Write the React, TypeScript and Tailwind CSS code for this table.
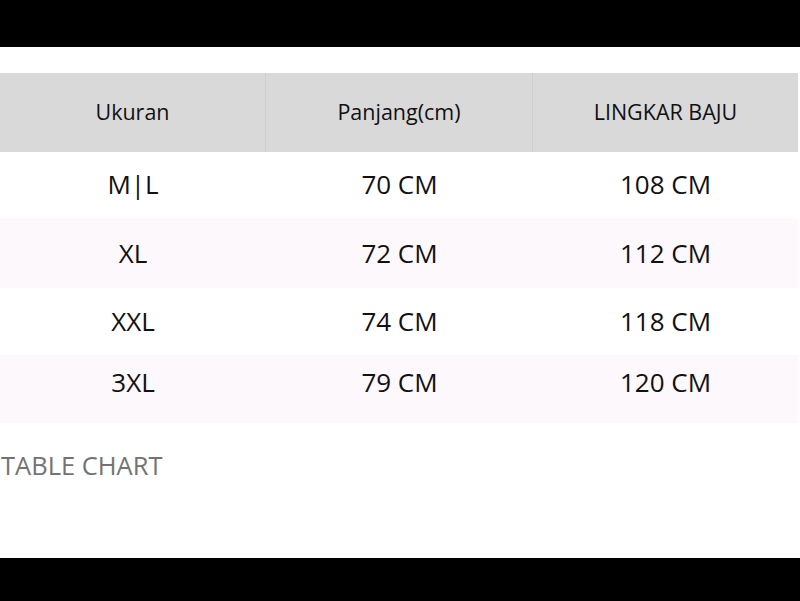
const rows = [
  { size: "M|L", len: "70 CM", chest: "108 CM", bg: "bg-white", h: "h-[66px] pb-[1px]" },
  { size: "XL", len: "72 CM", chest: "112 CM", bg: "bg-[#fdf8fc]", h: "h-[70px]" },
  { size: "XXL", len: "74 CM", chest: "118 CM", bg: "bg-white", h: "h-[67px]" },
  { size: "3XL", len: "79 CM", chest: "120 CM", bg: "bg-[#fdf8fc]", h: "h-[68px] pb-[14px]" },
];

export default function App() {
  return (
    <div className="w-[800px] h-[601px] bg-white flex flex-col overflow-hidden font-['Open_Sans',sans-serif] text-[#111]">
      <div className="h-[47px] bg-black shrink-0" />
      <div className="h-[26px] shrink-0" />

      {/* header */}
      <div className="w-[798px] h-[79px] grid grid-cols-[266px_267px_265px] bg-[#d9d9d9] text-[21.5px]">
        <div className="flex items-center justify-center border-r border-[#cfcfcf]">Ukuran</div>
        <div className="flex items-center justify-center border-r border-[#cfcfcf]">Panjang(cm)</div>
        <div className="flex items-center justify-center">LINGKAR BAJU</div>
      </div>

      {/* body */}
      {rows.map((r) => (
        <div
          key={r.size}
          className={`w-[798px] grid grid-cols-[266px_267px_265px] text-[26px] ${r.bg} ${r.h}`}
        >
          <div className="flex items-center justify-center">{r.size}</div>
          <div className="flex items-center justify-center">{r.len}</div>
          <div className="flex items-center justify-center">{r.chest}</div>
        </div>
      ))}

      <div className="flex-1 pt-[25px]">
        <p className="text-[25.5px] leading-[34px] text-[#737373] ml-[1px]">TABLE CHART</p>
      </div>
      <div className="h-[43px] bg-black shrink-0" />
    </div>
  );
}
